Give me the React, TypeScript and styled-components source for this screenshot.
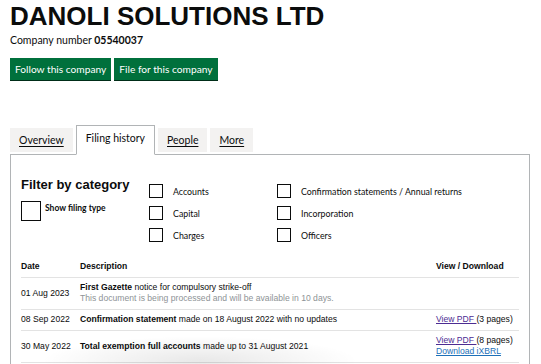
import React from "react";
import styled, { createGlobalStyle } from "styled-components";

const Global = createGlobalStyle`
  html, body { margin: 0; padding: 0; background: #fff; }
  body { font-family: "Liberation Sans", Arial, sans-serif; color: #0b0c0c; }
`;

const Page = styled.div`
  position: relative;
  padding: 1px 11px 0 10px;
  width: 541px;
  box-sizing: border-box;
  overflow: hidden;
  height: 364px;
`;

const Title = styled.h1`
  margin: 0;
  font-family: "Liberation Sans", Arial, sans-serif;
  font-weight: 700;
  font-size: 26px;
  line-height: 30px;
`;

const CompanyNumber = styled.p`
  margin: 1px 0 0 0;
  font-family: Lato, sans-serif;
  font-size: 10.5px;
  line-height: 16px;
  strong { font-weight: 700; }
`;

const ButtonRow = styled.div`
  display: flex;
  gap: 3px;
  margin-top: 10px;
`;

const GreenButton = styled.a`
  display: inline-flex;
  align-items: center;
  height: 22px;
  padding: 0 5px;
  background: #00703c;
  color: #fff;
  font-family: Lato, sans-serif;
  font-size: 10.2px;
  box-shadow: 0 1px 0 #002d18;
  text-decoration: none;
`;

const TabList = styled.div`
  display: flex;
  align-items: flex-end;
  gap: 3px;
  margin-top: 45px;
  position: relative;
  z-index: 1;
`;

const Tab = styled.a<{ $active?: boolean }>`
  display: inline-flex;
  align-items: center;
  justify-content: center;
  box-sizing: border-box;
  font-family: Lato, sans-serif;
  font-size: 10.5px;
  color: #0b0c0c;
  text-decoration: ${(p) => (p.$active ? "none" : "underline")};
  text-underline-offset: 2px;
  padding: 0 9px;
  height: ${(p) => (p.$active ? "30px" : "24px")};
  margin-bottom: ${(p) => (p.$active ? "-1px" : "2px")};
  background: ${(p) => (p.$active ? "#fff" : "#f3f2f1")};
  border: ${(p) => (p.$active ? "1px solid #b1b4b6" : "none")};
  border-bottom: ${(p) => (p.$active ? "1px solid #fff" : "none")};
  padding-bottom: ${(p) => (p.$active ? "4px" : "0")};
`;

const Panel = styled.div`
  border: 1px solid #b1b4b6;
  padding: 22px 10px 0 10px;
  height: 220px;
  box-sizing: border-box;
`;

const FilterRow = styled.div`
  display: grid;
  grid-template-columns: 128px 128px 1fr;
`;

const FilterTitle = styled.h2`
  margin: 0;
  font-size: 13px;
  line-height: 16px;
  font-weight: 700;
`;

const ShowType = styled.label`
  display: flex;
  align-items: flex-start;
  gap: 4px;
  margin-top: 8px;
  font-family: Lato, sans-serif;
  font-size: 8.5px;
  font-weight: 700;
  span:last-child { margin-top: 2px; }
`;

const BigBox = styled.span`
  width: 18px;
  height: 18px;
  border: 1px solid #0b0c0c;
  flex: none;
`;

const CheckList = styled.div`
  display: flex;
  flex-direction: column;
  gap: 8px;
  padding-top: 7px;
`;

const CheckItem = styled.label`
  display: flex;
  align-items: center;
  gap: 10px;
  font-family: Lato, sans-serif;
  font-size: 8.8px;
  height: 14px;
`;

const SmallBox = styled.span`
  width: 12px;
  height: 12px;
  border: 1px solid #0b0c0c;
  flex: none;
`;

const Table = styled.table`
  width: 100%;
  border-collapse: collapse;
  margin-top: 19px;
  font-family: "Liberation Sans", Arial, sans-serif;
  font-size: 8.6px;
  color: #0b0c0c;
`;

const Th = styled.th`
  text-align: left;
  font-weight: 700;
  padding: 0 0 5px 0;
  border-bottom: 1px solid #e3e3e3;
  line-height: 11px;
  height: 11px;
`;

const Td = styled.td`
  padding: 4px 0 5px 0;
  border-bottom: 1px solid #e3e3e3;
  vertical-align: middle;
  line-height: 11px;
  height: 11px;
`;

const Muted = styled.div`
  color: #8e9396;
`;

const Link = styled.a<{ $blue?: boolean }>`
  color: ${(p) => (p.$blue ? "#1d70b8" : "#4c2c92")};
  text-decoration: underline;
`;

const BottomShade = styled.div`
  position: absolute;
  left: 40px;
  bottom: -22px;
  width: 320px;
  height: 50px;
  pointer-events: none;
  background: radial-gradient(ellipse at center, rgba(0, 0, 0, 0.09) 0%, rgba(0, 0, 0, 0) 70%);
`;

export default function App() {
  const cats1 = ["Accounts", "Capital", "Charges"];
  const cats2 = ["Confirmation statements / Annual returns", "Incorporation", "Officers"];
  return (
    <>
      <Global />
      <Page>
        <Title>DANOLI SOLUTIONS LTD</Title>
        <CompanyNumber>
          Company number <strong>05540037</strong>
        </CompanyNumber>
        <ButtonRow>
          <GreenButton>Follow this company</GreenButton>
          <GreenButton>File for this company</GreenButton>
        </ButtonRow>
        <TabList>
          <Tab>Overview</Tab>
          <Tab $active>Filing history</Tab>
          <Tab>People</Tab>
          <Tab>More</Tab>
        </TabList>
        <Panel>
          <FilterRow>
            <div>
              <FilterTitle>Filter by category</FilterTitle>
              <ShowType>
                <BigBox />
                <span>Show filing type</span>
              </ShowType>
            </div>
            <CheckList>
              {cats1.map((c) => (
                <CheckItem key={c}>
                  <SmallBox />
                  {c}
                </CheckItem>
              ))}
            </CheckList>
            <CheckList>
              {cats2.map((c) => (
                <CheckItem key={c}>
                  <SmallBox />
                  {c}
                </CheckItem>
              ))}
            </CheckList>
          </FilterRow>
          <Table>
            <colgroup>
              <col style={{ width: 59 }} />
              <col />
              <col style={{ width: 83 }} />
            </colgroup>
            <thead>
              <tr>
                <Th>Date</Th>
                <Th>Description</Th>
                <Th>View / Download</Th>
              </tr>
            </thead>
            <tbody>
              <tr>
                <Td>01 Aug 2023</Td>
                <Td>
                  <div>
                    <strong>First Gazette</strong> notice for compulsory strike-off
                  </div>
                  <Muted>This document is being processed and will be available in 10 days.</Muted>
                </Td>
                <Td />
              </tr>
              <tr>
                <Td>08 Sep 2022</Td>
                <Td>
                  <strong>Confirmation statement</strong> made on 18 August 2022 with no updates
                </Td>
                <Td>
                  <Link>View PDF </Link>(3 pages)
                </Td>
              </tr>
              <tr>
                <Td>30 May 2022</Td>
                <Td>
                  <strong>Total exemption full accounts</strong> made up to 31 August 2021
                </Td>
                <Td>
                  <div>
                    <Link>View PDF </Link>(8 pages)
                  </div>
                  <Link $blue>Download iXBRL</Link>
                </Td>
              </tr>
            </tbody>
          </Table>
        </Panel>
        <BottomShade />
      </Page>
    </>
  );
}
